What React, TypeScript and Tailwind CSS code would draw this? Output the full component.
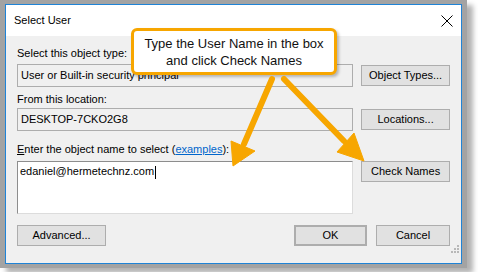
import React from "react";

const ORANGE = "#f7a600";

function Btn({ label, className = "" }: { label: React.ReactNode; className?: string }) {
  return (
    <button
      type="button"
      className={`h-[21px] bg-[#e1e1e1] border border-[#adadad] text-[11px] leading-none text-black ${className}`}
    >
      {label}
    </button>
  );
}

function CloseIcon() {
  return (
    <svg width="12" height="12" viewBox="0 0 12 12">
      <path d="M0.5 0.5 L11.5 11.5 M11.5 0.5 L0.5 11.5" stroke="#000" strokeWidth="1" />
    </svg>
  );
}

function SizeGrip() {
  const dots = [
    [6, 0],
    [3, 3],
    [6, 3],
    [0, 6],
    [3, 6],
    [6, 6],
  ];
  return (
    <svg width="8" height="8" viewBox="0 0 8 8" className="absolute right-[2px] bottom-[10px]">
      {dots.map(([x, y]) => (
        <rect key={`${x}-${y}`} x={x} y={y} width="2" height="2" fill="#b8b8b8" />
      ))}
    </svg>
  );
}

function Arrows() {
  return (
    <svg className="absolute inset-0 pointer-events-none" width="478" height="272" viewBox="0 0 478 272">
      <g stroke={ORANGE} strokeWidth="6" strokeLinecap="round" fill="none">
        <line x1="272" y1="79" x2="244" y2="144" />
        <line x1="284" y1="79" x2="344" y2="141" />
      </g>
      <g fill={ORANGE} stroke={ORANGE} strokeWidth="1" strokeLinejoin="round">
        <polygon points="233,166 231,141 255,151" />
        <polygon points="364,161 337,152 354,133" />
      </g>
    </svg>
  );
}

export default function App() {
  return (
    <div
      className="relative w-[478px] h-[272px] bg-white overflow-hidden"
      style={{ fontFamily: '"Liberation Sans", Arial, sans-serif' }}
    >
      <div className="w-[467px] h-[268px] bg-[#a3a3a3] pt-[4px] pl-[5px] pr-[5px] pb-[4px] shadow-[6px_5px_5px_rgba(0,0,0,0.3)]">
        <div className="relative h-full flex flex-col border border-[#1f83d6] bg-[#f0f0f0]">
          {/* title bar */}
          <div className="h-[31px] bg-white flex items-center justify-between pl-[8px] pr-[8px]">
            <span className="text-[11px] text-black">Select User</span>
            <CloseIcon />
          </div>

          {/* body */}
          <div className="flex-1 pt-[10px] pl-[11px] pr-[11px] text-[11px] text-black">
            <div className="leading-[15px]">Select this object type:</div>
            <div className="mt-[3px] flex items-start gap-[8px]">
              <div className="w-[337px] h-[23px] border border-[#adadad] bg-[#f0f0f0] flex items-center pl-[3px]">
                User or Built-in security principal
              </div>
              <Btn label="Object Types..." className="w-[89px] mt-[1px]" />
            </div>

            <div className="mt-[5px] leading-[15px]">From this location:</div>
            <div className="mt-[1px] flex items-start gap-[8px]">
              <div className="w-[337px] h-[23px] border border-[#adadad] bg-[#f0f0f0] flex items-center pl-[3px]">
                DESKTOP-7CKO2G8
              </div>
              <Btn label="Locations..." className="w-[89px] mt-[1px]" />
            </div>

            <div className="mt-[11px] leading-[15px]">
              <span className="underline">E</span>nter the object name to select (
              <span className="text-[#0066cc] underline">examples</span>):
            </div>
            <div className="mt-[4px] flex items-start gap-[8px]">
              <div className="w-[337px] h-[53px] bg-white border-l border-t border-[#8d8d8d] border-r border-b border-r-[#dcdcdc] border-b-[#dcdcdc] pl-[2px] pt-[2px] leading-[14px]">
                edaniel@hermetechnz.com
                <span className="inline-block w-px h-[13px] bg-black align-middle ml-px" />
              </div>
              <Btn label="Check Names" className="w-[89px]" />
            </div>

            <div className="mt-[11px] flex items-start">
              <Btn label="Advanced..." className="w-[89px]" />
              <div className="flex-1" />
              <Btn
                label="OK"
                className="w-[73px] border-2 border-[#0078d7]"
              />
              <Btn label="Cancel" className="w-[74px] ml-[9px]" />
            </div>
          </div>
          <SizeGrip />
        </div>
      </div>

      {/* callout */}
      <div className="absolute left-[131px] top-[28px] w-[206px] h-[47px] rounded-[6px] border-[3px] border-[#f7a600] bg-white shadow-[2px_2px_3px_rgba(0,0,0,0.25)] flex flex-col items-center justify-center text-[13px] leading-[17px] text-[#111]">
        <span>Type the User Name in the box</span>
        <span>and click Check Names</span>
      </div>
      <Arrows />
    </div>
  );
}
